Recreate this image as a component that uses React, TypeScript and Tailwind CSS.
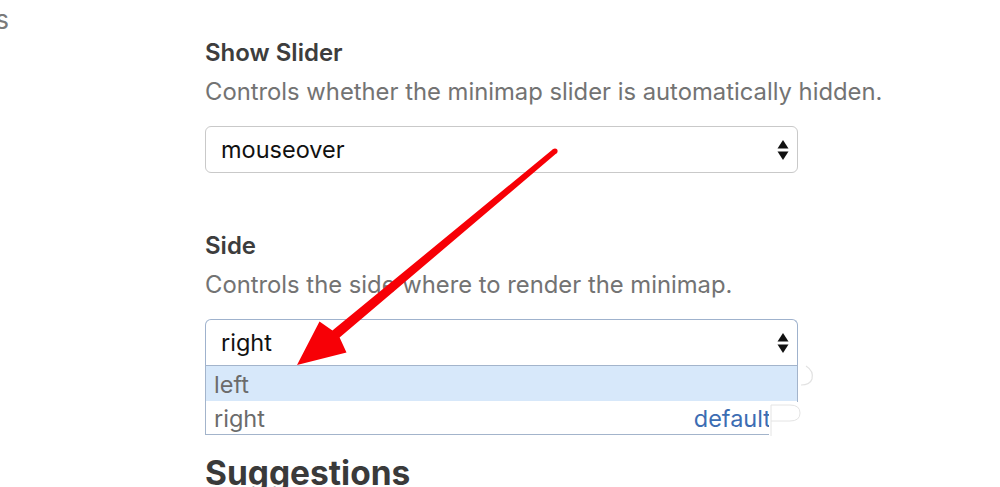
import React from "react";

function Arrows() {
  return (
    <svg width="12" height="22" viewBox="0 0 12 22" className="shrink-0">
      <polygon points="6,1 11.5,9.5 0.5,9.5" fill="#111" />
      <polygon points="0.5,12.5 11.5,12.5 6,21" fill="#111" />
    </svg>
  );
}

export default function App() {
  return (
    <div
      className="relative w-[1000px] h-[487px] overflow-hidden bg-white"
      style={{ fontFamily: "Inter, 'Noto Sans', sans-serif" }}
    >
      <div className="flex">
        <div className="w-[205px] shrink-0">
          <div className="mt-[4px] w-[9px] overflow-hidden flex justify-end whitespace-nowrap text-[26px] leading-[32px] text-[#7a7a7a]">
            Editors
          </div>
        </div>
        <div className="w-[593px] shrink-0 pt-[38px] flex flex-col">
          <div className="text-[24px] leading-[30px] font-semibold text-[#3d3d3d]">Show Slider</div>
          <div className="mt-[8px] text-[23.8px] leading-[32px] text-[#737373] whitespace-nowrap">
            Controls whether the minimap slider is automatically hidden.
          </div>
          <div className="mt-[18px] h-[47px] rounded-[6px] border border-[#c9c9c9] flex items-center justify-between pl-[15px] pr-[8px]">
            <span className="text-[23.5px] leading-[30px] text-[#111]">mouseover</span>
            <Arrows />
          </div>

          <div className="mt-[58px] text-[24px] leading-[30px] font-semibold text-[#3d3d3d]">Side</div>
          <div className="mt-[8px] text-[23.8px] leading-[32px] text-[#737373] whitespace-nowrap">
            Controls the side where to render the minimap.
          </div>
          <div className="mt-[18px] h-[46px] rounded-t-[6px] border-[1.5px] border-b-0 border-[#9fb2cd] flex items-center justify-between pl-[15px] pr-[8px]">
            <span className="text-[23.5px] leading-[30px] text-[#111]">right</span>
            <Arrows />
          </div>
          <div className="relative h-[70px] border-[1.5px] border-[#a3b4cb] flex flex-col">
            <div className="h-[35px] bg-[#d7e8fa] flex items-center pl-[8px] pt-[3px] text-[23.5px] text-[#6b6b6b]">left</div>
            <div className="h-[32px] bg-white flex items-center justify-between pl-[8px] pr-[26px] pt-[3px] text-[23.5px] text-[#6b6b6b]">
              <span>right</span>
              <span className="text-[#3c6db3]">default</span>
            </div>
          </div>

          <div className="mt-[18px] text-[33.5px] leading-[40px] font-bold text-[#3a3a3a]">Suggestions</div>
        </div>
      </div>

      <svg
        className="absolute left-0 top-0 pointer-events-none"
        width="1000"
        height="487"
        viewBox="0 0 1000 487"
      >
        <rect x="769" y="402" width="32" height="35" fill="#fff" />
        <path d="M771 436 L771 405 L790 405 Q800 405 800 413 Q800 421 790 421 L771 421" fill="none" stroke="#e4e4e4" strokeWidth="1" />
        <path d="M806 366 Q814 371 812 379 Q810 385 801 385" fill="none" stroke="#e2e2e2" strokeWidth="1.2" />
        <polygon
          points="553.2,149 332.4,330.6 319.5,321.5 297,365 346.5,352.5 339.6,337.5 556.8,153"
          fill="#f70006"
        />
        <circle cx="555" cy="151" r="2.6" fill="#f70006" />
      </svg>
    </div>
  );
}
